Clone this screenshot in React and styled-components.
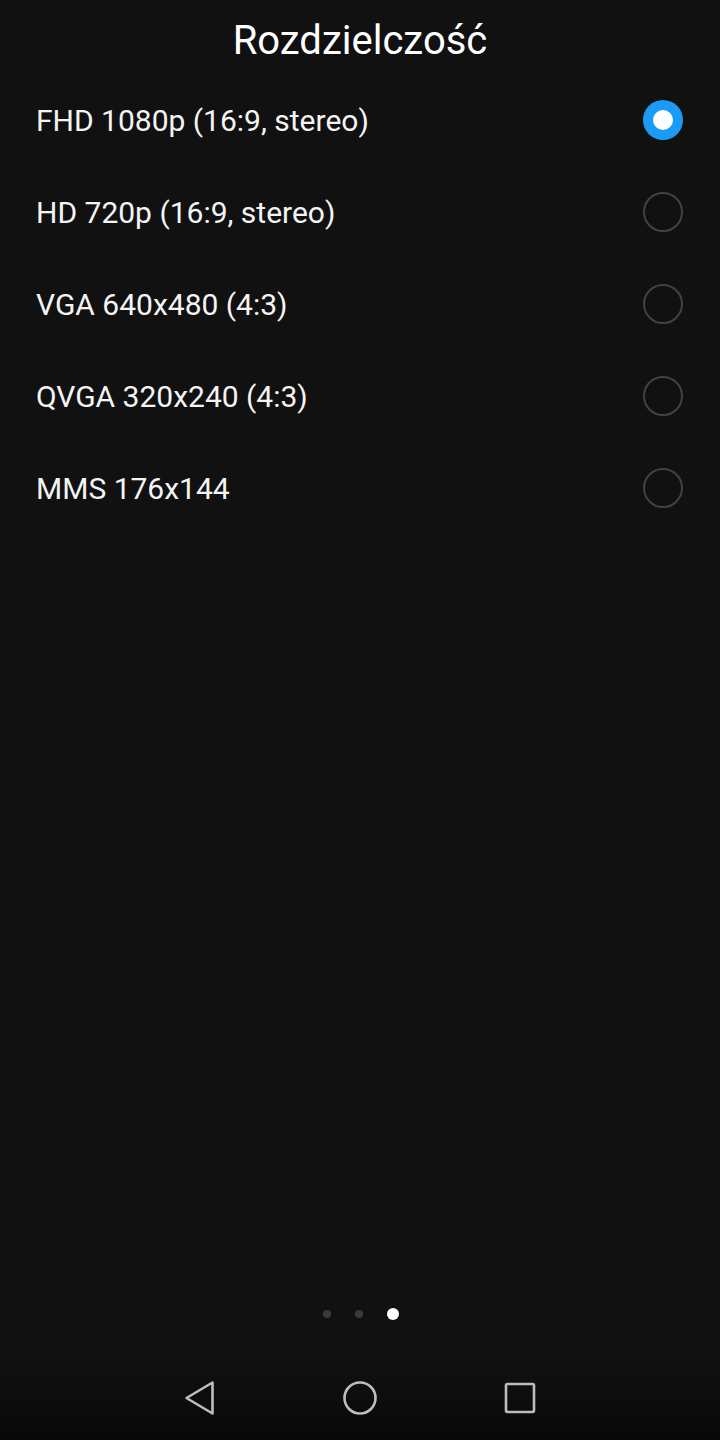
import styled, { createGlobalStyle } from "styled-components";

const GlobalStyle = createGlobalStyle`
  html, body {
    margin: 0;
    padding: 0;
    background: #111111;
  }
  body {
    font-family: Roboto, "Noto Sans", sans-serif;
    color: #ffffff;
  }
`;

const options = [
  { label: "FHD 1080p (16:9, stereo)", selected: true },
  { label: "HD 720p (16:9, stereo)" },
  { label: "VGA 640x480 (4:3)" },
  { label: "QVGA 320x240 (4:3)" },
  { label: "MMS 176x144" },
];

const Screen = styled.div`
  width: 720px;
  height: 1440px;
  display: flex;
  flex-direction: column;
  background: #111111;
  overflow: hidden;
`;

const Title = styled.h1`
  margin: 0;
  height: 74px;
  box-sizing: border-box;
  padding-top: 6px;
  display: flex;
  align-items: center;
  justify-content: center;
  font-size: 40px;
  font-weight: 400;
`;

const List = styled.div`
  display: flex;
  flex-direction: column;
`;

const Row = styled.div`
  height: 92px;
  display: flex;
  align-items: center;
  justify-content: space-between;
  padding: 0 37px 0 36px;
  font-size: 30px;
`;

const Label = styled.span`
  color: #f4f4f4;
`;

const Radio = styled.div`
  width: 40px;
  height: 40px;
  box-sizing: border-box;
  border-radius: 50%;
  display: flex;
  align-items: center;
  justify-content: center;
  border: ${({ checked }) => (checked ? "none" : "2px solid #424242")};
  background: ${({ checked }) => (checked ? "#1a9bf5" : "transparent")};
  &::after {
    content: "";
    display: ${({ checked }) => (checked ? "block" : "none")};
    width: 20px;
    height: 20px;
    border-radius: 50%;
    background: #ffffff;
  }
`;

const Spacer = styled.div`
  flex: 1;
`;

const Pager = styled.div`
  display: flex;
  justify-content: center;
  align-items: center;
  gap: 24px;
  height: 24px;
  margin-bottom: 30px;
  padding-left: 2px;
`;

const Dot = styled.div`
  width: ${({ active }) => (active ? "12px" : "8px")};
  height: ${({ active }) => (active ? "12px" : "8px")};
  border-radius: 50%;
  background: ${({ active }) => (active ? "#ffffff" : "#3a3a3a")};
`;

const NavBar = styled.div`
  height: 84px;
  display: flex;
  align-items: center;
  justify-content: center;
  gap: 112px;
  background: linear-gradient(#111111, #080808);
`;

const NavButton = styled.div`
  width: 48px;
  height: 48px;
  display: flex;
  align-items: center;
  justify-content: center;
  svg {
    display: block;
  }
`;

export default function App() {
  return (
    <Screen>
      <GlobalStyle />
      <Title>Rozdzielczość</Title>
      <List>
        {options.map((o) => (
          <Row key={o.label}>
            <Label>{o.label}</Label>
            <Radio checked={o.selected} />
          </Row>
        ))}
      </List>
      <Spacer />
      <Pager>
        <Dot />
        <Dot />
        <Dot active />
      </Pager>
      <NavBar>
        <NavButton>
          <svg width="36" height="36" viewBox="0 0 36 36">
            <path
              d="M30.5 2.5 L30.5 33.5 L4.5 18 Z"
              fill="none"
              stroke="#bdbdbd"
              strokeWidth="2.6"
              strokeLinejoin="round"
            />
          </svg>
        </NavButton>
        <NavButton>
          <svg width="36" height="36" viewBox="0 0 36 36">
            <circle cx="18" cy="18" r="15.5" fill="none" stroke="#bdbdbd" strokeWidth="2.6" />
          </svg>
        </NavButton>
        <NavButton>
          <svg width="36" height="36" viewBox="0 0 36 36">
            <rect x="4" y="4" width="28" height="28" rx="1.5" fill="none" stroke="#bdbdbd" strokeWidth="2.6" />
          </svg>
        </NavButton>
      </NavBar>
    </Screen>
  );
}
